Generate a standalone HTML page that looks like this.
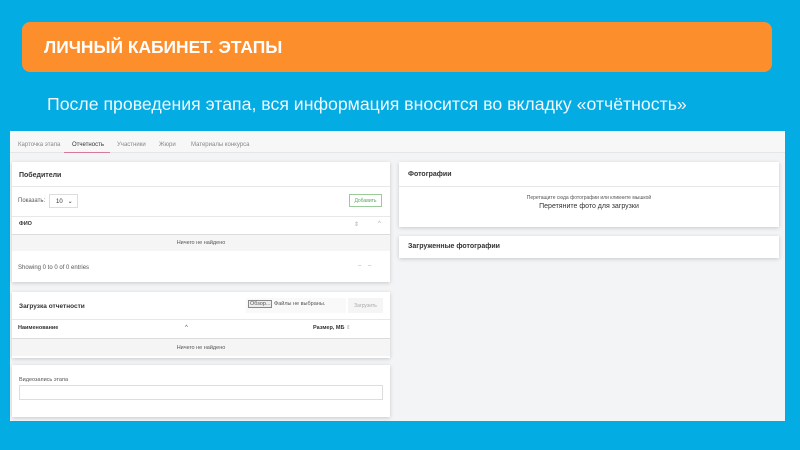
<!DOCTYPE html>
<html><head><meta charset="utf-8"><style>
*{box-sizing:border-box;margin:0;padding:0}
body{width:800px;height:450px;background:#04ace4;font-family:"Liberation Sans",sans-serif;position:relative;overflow:hidden}
.hdr{position:absolute;left:22px;top:22px;width:750px;height:50px;background:#fd8e2c;border-radius:8px}
.hdr span{position:absolute;left:22px;top:15px;color:#fff;font-weight:bold;font-size:17.4px;white-space:nowrap}
.sub{position:absolute;left:47px;top:94px;color:#f2f8fc;font-size:17.7px;white-space:nowrap}
.scr{position:absolute;left:10px;top:131px;width:775px;height:290px;background:#f3f4f6}
.tabs{position:absolute;left:0;top:0;width:775px;height:22px;background:#f7f7f8;border-bottom:1px solid #e6e6e6;font-size:6px;color:#888}
.tabs span{position:absolute;top:11px}
.card{position:absolute;background:#fff;box-shadow:0 1px 4px rgba(0,0,0,.18)}
.t{font-size:7px;font-weight:bold;color:#333;position:absolute}
.s{font-size:6px;color:#555;position:absolute}
.line{position:absolute;left:0;right:0;height:1px;background:#e8e8e8}
.row{position:absolute;left:0;right:0;background:#f5f5f5;font-size:5.5px;color:#555;text-align:center}
</style></head><body>
<div class="hdr"><span>ЛИЧНЫЙ КАБИНЕТ. ЭТАПЫ</span></div>
<div class="sub">После проведения этапа, вся информация вносится во вкладку «отчётность»</div>
<div class="scr">
 <div class="tabs">
  <span style="left:8px">Карточка этапа</span>
  <span style="left:62px;color:#333">Отчетность</span>
  <div style="position:absolute;left:54px;top:21px;width:46px;height:1px;background:#d67a9a"></div>
  <span style="left:107px">Участники</span>
  <span style="left:149px">Жюри</span>
  <span style="left:181px">Материалы конкурса</span>
 </div>
 <div class="card" style="left:2px;top:31px;width:378px;height:120px">
  <div class="t" style="left:7px;top:10px">Победители</div>
  <div class="line" style="top:24px"></div>
  <div class="s" style="left:6px;top:36px">Показать:</div>
  <div style="position:absolute;left:37px;top:32px;width:29px;height:14px;border:1px solid #ddd;font-size:6px;color:#333;padding:3px 0 0 6px">10 &nbsp;&nbsp;⌄</div>
  <div style="position:absolute;left:337px;top:32px;width:33px;height:13px;border:1px solid #9c9;font-size:5px;color:#5a5;text-align:center;padding-top:3px">Добавить</div>
  <div class="line" style="top:54px"></div>
  <div class="t" style="left:7px;top:59px;font-size:5.5px">ФИО</div>
  <div class="s" style="left:342px;top:59px;color:#aaa">⇕</div><div class="s" style="left:366px;top:59px;color:#aaa">^</div>
  <div class="row" style="top:72px;height:17px;line-height:17px;border-top:1px solid #ddd">Ничего не найдено</div>
  <div class="s" style="left:6px;top:103px">Showing 0 to 0 of 0 entries</div>
  <div class="s" style="left:346px;top:101px;color:#aaa">–&nbsp;&nbsp;&nbsp;&nbsp;–</div>
 </div>
 <div class="card" style="left:2px;top:161px;width:378px;height:66px">
  <div class="t" style="left:7px;top:11px;font-size:6.5px">Загрузка отчетности</div>
  <div style="position:absolute;left:234px;top:6px;width:100px;height:15px;background:#f9f9f9;font-size:5.5px;color:#555;padding:3px 0 0 2px"><span style="border:1px solid #888;background:#eee;padding:0 1px">Обзор...</span> Файлы не выбраны.</div>
  <div style="position:absolute;left:336px;top:6px;width:35px;height:15px;background:#f5f5f5;font-size:5px;color:#aaa;text-align:center;padding-top:5px">Загрузить</div>
  <div class="line" style="top:27px"></div>
  <div class="t" style="left:6px;top:33px;font-size:5.5px">Наименование</div>
  <div class="s" style="left:173px;top:33px">^</div>
  <div class="t" style="left:301px;top:33px;font-size:5.5px">Размер, МБ <span style="color:#aaa;font-weight:normal">⇕</span></div>
  <div class="row" style="top:46px;height:18px;line-height:18px;border-top:1px solid #ddd">Ничего не найдено</div>
 </div>
 <div class="card" style="left:2px;top:234px;width:378px;height:52px">
  <div class="s" style="left:7px;top:12px;font-size:5.5px">Видеозапись этапа</div>
  <div style="position:absolute;left:7px;top:20px;width:364px;height:15px;border:1px solid #ddd"></div>
 </div>
 <div class="card" style="left:389px;top:31px;width:380px;height:65px">
  <div class="t" style="left:9px;top:9px">Фотографии</div>
  <div class="line" style="top:24px"></div>
  <div class="s" style="left:0;right:0;top:33px;text-align:center;font-size:5px">Перетащите сюда фотографии или кликните мышкой</div>
  <div class="s" style="left:0;right:0;top:41px;text-align:center;font-size:7px;color:#333">Перетяните фото для загрузки</div>
 </div>
 <div class="card" style="left:389px;top:105px;width:380px;height:22px">
  <div class="t" style="left:9px;top:7px">Загруженные фотографии</div>
 </div>
</div>
</body></html>
